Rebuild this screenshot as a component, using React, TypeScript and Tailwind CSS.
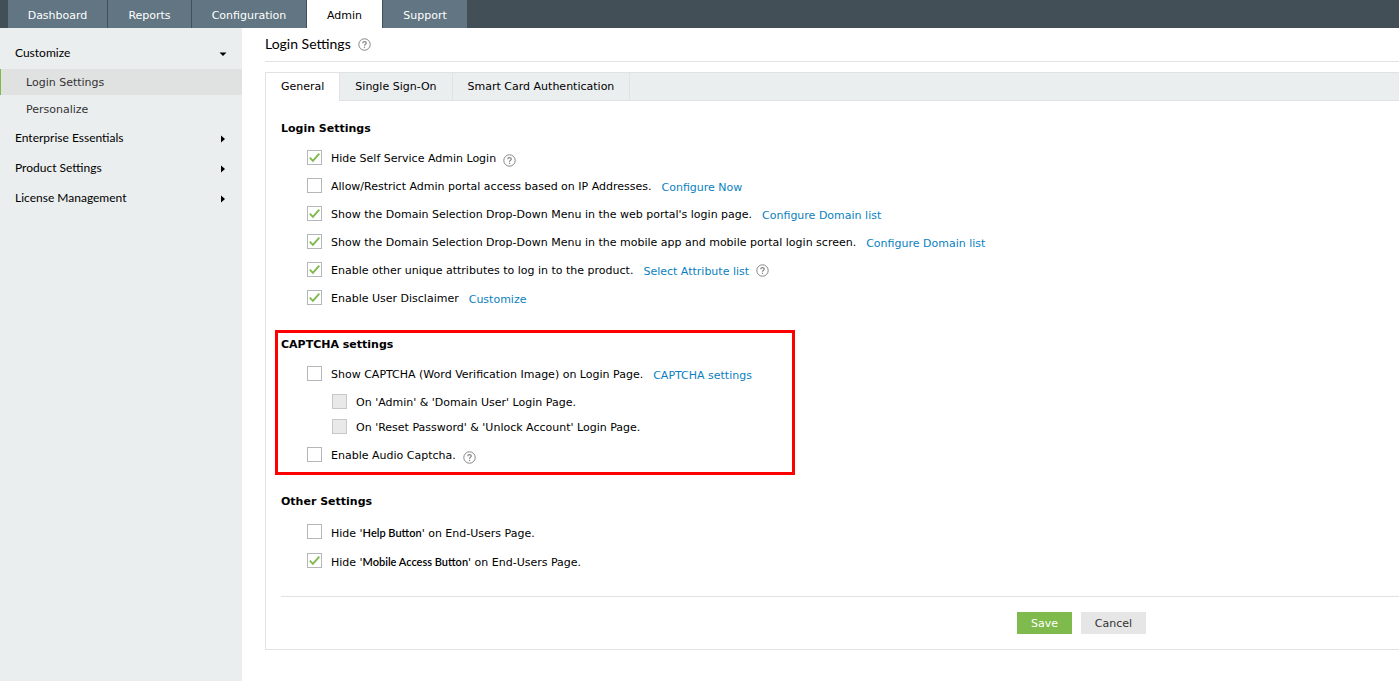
import { useState } from "react";
import type { ReactNode } from "react";

const NAV = [
  { label: "Dashboard", width: "w-[99px]" },
  { label: "Reports", width: "w-[83px]" },
  { label: "Configuration", width: "w-[114px]" },
  { label: "Admin", width: "w-[75px]" },
  { label: "Support", width: "w-[84px]" },
];

const TABS = ["General", "Single Sign-On", "Smart Card Authentication"];

const LOGIN_OPTIONS = [
  { label: "Hide Self Service Admin Login", checked: true, help: true },
  { label: "Allow/Restrict Admin portal access based on IP Addresses.", link: "Configure Now" },
  { label: "Show the Domain Selection Drop-Down Menu in the web portal's login page.", checked: true, link: "Configure Domain list" },
  { label: "Show the Domain Selection Drop-Down Menu in the mobile app and mobile portal login screen.", checked: true, link: "Configure Domain list" },
  { label: "Enable other unique attributes to log in to the product.", checked: true, link: "Select Attribute list", help: true },
  { label: "Enable User Disclaimer", checked: true, link: "Customize" },
];

function HelpIcon({ className = "" }: { className?: string }) {
  return (
    <button type="button" aria-label="Help" className={`shrink-0 ${className}`}>
      <svg width="13" height="13" viewBox="0 0 13 13" fill="none" stroke="#858585">
        <circle cx="6.5" cy="6.5" r="5.7" strokeWidth="1" />
        <path d="M4.7 5.3C4.7 4.2 5.5 3.6 6.5 3.6S8.3 4.2 8.3 5.1C8.3 6.2 6.5 6.3 6.5 7.7" strokeWidth="1.2" />
        <path d="M6.5 8.7V9.9" strokeWidth="1.2" />
      </svg>
    </button>
  );
}

function Caret({ open = false }: { open?: boolean }) {
  return (
    <svg width="8" height="8" viewBox="0 0 8 8" fill="#000" className="mt-0.5">
      {open ? <path d="M0.5 2.5H7.5L4 6Z" /> : <path d="M2 0.5V7.5L6 4Z" />}
    </svg>
  );
}

type CheckProps = { children: ReactNode; checked?: boolean; disabled?: boolean };

function Check({ children, checked = false, disabled = false }: CheckProps) {
  return (
    <label className="flex items-start gap-[9px]">
      <span className="relative mt-px flex">
        <input
          type="checkbox"
          defaultChecked={checked}
          disabled={disabled}
          className="peer size-[15px] appearance-none border border-[#b4b7ba] bg-white disabled:border-[#c8c8c8] disabled:bg-[#e9e9e9]"
        />
        <svg width="15" height="15" viewBox="0 0 15 15" fill="none" stroke="#7fba4c" strokeWidth="1.9" className="pointer-events-none absolute inset-0 hidden peer-checked:block">
          <path d="M2.8 7.6L5.9 10.8L12.3 3.7" />
        </svg>
      </span>
      <span className="pt-0.5">{children}</span>
    </label>
  );
}

function TextLink({ children }: { children: ReactNode }) {
  return <a href="#" className="ml-[10px] pt-1 text-[#0a7fc0] hover:underline">{children}</a>;
}

function SectionTitle({ children }: { children: ReactNode }) {
  return <h2 className="mb-[3px] leading-6 font-bold">{children}</h2>;
}

export default function App() {
  const [tab, setTab] = useState("General");

  return (
    <div className="flex min-h-screen flex-col overflow-x-hidden bg-white font-['Verdana','DejaVu_Sans',sans-serif] text-[11px] leading-4 text-black">
      <nav className="flex h-7 gap-px bg-[#434f57] pl-2">
        {NAV.map(({ label, width }) => (
          <a key={label} href="#"
            className={`flex items-center justify-center pt-1 ${width} ${label === "Admin" ? "bg-white text-black" : "bg-[#617682] text-white"}`}>
            {label}
          </a>
        ))}
      </nav>

      <div className="flex grow">
        <aside className="w-[242px] shrink-0 bg-[#ebeeef] pt-[9px] font-[Lato,sans-serif] text-xs">
          <button type="button" className="flex h-8 w-full items-center justify-between pr-[15px] pl-[15px]">
            Customize <Caret open />
          </button>
          <div className="flex flex-col font-['Verdana','DejaVu_Sans',sans-serif] text-[11px] text-[#333]">
            <a href="#" className="flex h-[26px] items-center border-l border-[#7fba4c] bg-[#e0e1e1] pt-0.5 pl-[25px]">Login Settings</a>
            <a href="#" className="flex h-7 items-center border-l border-transparent pt-0.5 pl-[25px]">Personalize</a>
          </div>
          {["Enterprise Essentials", "Product Settings", "License Management"].map((label) => (
            <button key={label} type="button" className="flex h-[30px] w-full items-center justify-between pr-[15px] pl-[15px]">
              {label} <Caret />
            </button>
          ))}
        </aside>

        <main className="min-w-0 grow pl-[23px]">
          <header className="flex h-[34px] items-center gap-[7px] border-b border-[#e3e3e3]">
            <h1 className="pb-0.5 font-[Lato,sans-serif] text-sm">Login Settings</h1>
            <HelpIcon />
          </header>

          <div className="mt-[10px] border-y border-l border-[#e0e2e3]">
            <div role="tablist" className="flex h-7 bg-[#ebeeef]">
              {TABS.map((label) => (
                <button key={label} type="button" role="tab" aria-selected={tab === label} onClick={() => setTab(label)}
                  className={`border-r border-r-[#e0e2e3] px-[15px] ${tab === label ? "bg-white" : "border-b border-b-[#e0e2e3]"}`}>
                  {label}
                </button>
              ))}
              <div className="grow border-b border-[#e0e2e3]" />
            </div>

            <form className="pt-4 pb-[15px] pl-[15px]" onSubmit={(e) => e.preventDefault()}>
              <section>
                <SectionTitle>Login Settings</SectionTitle>
                {LOGIN_OPTIONS.map(({ label, checked, link, help }) => (
                  <div key={label} className="flex h-7 items-center pl-[26px]">
                    <Check checked={checked}>{label}</Check>
                    {link && <TextLink>{link}</TextLink>}
                    {help && <HelpIcon className={link ? "ml-[7px]" : "mt-1 ml-[7px]"} />}
                  </div>
                ))}
              </section>

              <section className="mt-[18px] -ml-[6px] w-[520px] border-3 border-[#fe0000] pb-[3px] pl-[3px]">
                <SectionTitle>CAPTCHA settings</SectionTitle>
                <div className="flex h-7 items-center pl-[26px]">
                  <Check>Show CAPTCHA (Word Verification Image) on Login Page.</Check>
                  <TextLink>CAPTCHA settings</TextLink>
                </div>
                <div className="flex flex-col gap-px py-0.5 pl-[51px]">
                  <div className="flex h-6 items-center">
                    <Check disabled>On 'Admin' &amp; 'Domain User' Login Page.</Check>
                  </div>
                  <div className="flex h-6 items-center">
                    <Check disabled>On 'Reset Password' &amp; 'Unlock Account' Login Page.</Check>
                  </div>
                </div>
                <div className="flex h-7 items-center pl-[26px]">
                  <Check>Enable Audio Captcha.</Check>
                  <HelpIcon className="mt-1 ml-[7px]" />
                </div>
              </section>

              <section className="mt-[15px]">
                <SectionTitle>Other Settings</SectionTitle>
                <div className="flex flex-col gap-px pt-px pl-[26px]">
                  <div className="flex h-7 items-center">
                    <Check>Hide '<b className="font-[Lato,sans-serif] font-semibold">Help Button</b>' on End-Users Page.</Check>
                  </div>
                  <div className="flex h-7 items-center">
                    <Check checked>Hide '<b className="font-[Lato,sans-serif] font-semibold">Mobile Access Button</b>' on End-Users Page.</Check>
                  </div>
                </div>
              </section>

              <div className="mt-[21px] flex justify-end gap-[9px] border-t border-[#e0e2e3] pt-[15px] pr-[253px]">
                <button type="submit" className="h-[22px] w-[55px] bg-[#7fba4c] pt-0.5 text-white">Save</button>
                <button type="button" className="h-[22px] w-[65px] bg-[#e6e6e6] pt-0.5 text-[#333]">Cancel</button>
              </div>
            </form>
          </div>
        </main>
      </div>
    </div>
  );
}
